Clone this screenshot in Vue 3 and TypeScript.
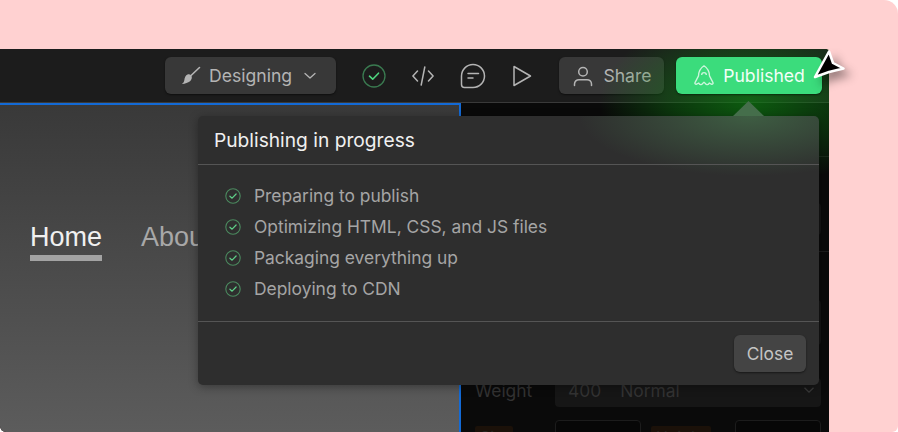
<script setup lang="ts">
const steps = [
  'Preparing to publish',
  'Optimizing HTML, CSS, and JS files',
  'Packaging everything up',
  'Deploying to CDN'
]
</script>

<template>
  <div class="card">
    <div class="window">
      <header class="topbar">
        <button class="btn mode">
          <svg width="22" height="22" viewBox="0 0 22 22" fill="none">
            <path d="M20.500 2.500 11.500 11" stroke="#b4b4b4" stroke-width="1.600" stroke-linecap="round" />
            <path d="M8.500 9.500c2-.8 4 .3 4.300 2.500.3 3-2.500 6.500-10 7 1.500-1 2.200-2 2.500-3.800.3-2.700 1.500-5 3.200-5.700z" fill="#b4b4b4" />
          </svg>
          <span>Designing</span>
          <svg class="chev" width="12" height="12" viewBox="0 0 12 12" fill="none">
            <path d="M1 3.500 6 8l5-4.500" stroke="#b4b4b4" stroke-width="1.300" stroke-linecap="round" stroke-linejoin="round" />
          </svg>
        </button>
        <div class="tools">
          <svg width="24" height="24" viewBox="0 0 24 24" fill="none">
            <circle cx="12" cy="12" r="11" stroke="#3a7a50" stroke-width="1.300" />
            <path d="m7.500 12.200 3.200 3 5.800-6" stroke="#4fd67f" stroke-width="1.600" stroke-linecap="round" stroke-linejoin="round" />
          </svg>
          <svg width="22" height="22" viewBox="0 0 22 22" fill="none" stroke="#b4b4b4" stroke-width="1.500" stroke-linecap="round" stroke-linejoin="round">
            <path d="M5.500 6 .9 11l4.600 5M16.500 6l4.600 5-4.600 5M12.800 2l-3.600 18" />
          </svg>
          <svg width="26" height="26" viewBox="0 0 26 26" fill="none" stroke="#b4b4b4" stroke-width="1.500" stroke-linecap="round" stroke-linejoin="round">
            <path d="M13 1.500C19.350 1.500 24.500 6.650 24.500 13S19.350 24.500 13 24.500H4.500c-1.700 0-3-1.300-3-3V13C1.500 6.650 6.650 1.500 13 1.500z" />
            <path d="M8 10.500h10.500M8 15h5" />
          </svg>
          <svg width="20" height="22" viewBox="0 0 20 22" fill="none" stroke="#b4b4b4" stroke-width="1.500" stroke-linejoin="round">
            <path d="M2 1.500v19L18.500 11z" />
          </svg>
        </div>
        <button class="btn share">
          <svg width="22" height="22" viewBox="0 0 22 22" fill="none" stroke="#b4b4b4" stroke-width="1.500" stroke-linecap="round">
            <circle cx="11" cy="6.800" r="4.300" />
            <path d="M2.500 20.500v-1.500c0-2.500 2-4.300 4.500-4.300h8c2.500 0 4.500 1.800 4.500 4.300v1.500" />
          </svg>
          <span>Share</span>
        </button>
        <button class="btn publish">
          <svg width="20" height="21" viewBox="1.500 0.500 17 18" fill="none" stroke="#cdf5dc" stroke-width="1.150" stroke-linejoin="round">
            <path d="M10 1.200C7 3.200 5.400 6.200 5.300 9.800L2.400 15.400c-.5 1 .3 2 1.300 1.500l1.800-1c.6 1.600 2.500 2 3.300.4L10 15.300l1.200 1c.8 1.600 2.700 1.200 3.300-.4l1.800 1c1 .5 1.800-.5 1.300-1.500L14.700 9.800C14.600 6.200 13 3.200 10 1.200z" />
            <path d="M8 9a2 2 0 1 1 4 0" />
          </svg>
          <span>Published</span>
        </button>
      </header>

      <div class="body">
        <main class="canvas">
          <nav class="nav">
            <a class="active">Home</a>
            <a>About</a>
          </nav>
        </main>
        <aside class="side">
          <div class="section first" />
          <div class="section second">
            <div class="field tall" />
          </div>
          <div class="field big" />
          <div class="row weight">
            <span class="label">Weight</span>
            <div class="select">
              <span>400</span>
              <span class="normal">Normal</span>
              <svg width="12" height="12" viewBox="0 0 12 12" fill="none">
                <path d="M1.500 3.800 6 8.200l4.500-4.400" stroke="#3a3a3a" stroke-width="1.300" />
              </svg>
            </div>
          </div>
          <div class="row size">
            <span class="tag">Size</span>
            <div class="box" />
            <span class="tag wide">Height</span>
            <div class="box" />
          </div>
        </aside>
      </div>

      <div class="glow" />

      <section class="pop">
        <span class="arrow" />
        <h2>Publishing in progress</h2>
        <ul>
          <li v-for="step in steps" :key="step">
            <svg width="16" height="16" viewBox="0 0 16 16" fill="none">
              <circle cx="8" cy="8" r="7.200" stroke="#4b8a5f" stroke-width="1.100" />
              <path d="m4.900 8.200 2.200 2 4-4.200" stroke="#5fd088" stroke-width="1.200" stroke-linecap="round" stroke-linejoin="round" />
            </svg>
            <span>{{ step }}</span>
          </li>
        </ul>
        <footer>
          <button class="btn close">Close</button>
        </footer>
      </section>

      <svg class="cursor" width="42" height="36" viewBox="0 0 42 36">
        <path d="M20 2.500 24 14l10.500 5.500L20 23 6 28z" fill="#000" stroke="#fff" stroke-width="2.500" stroke-linejoin="round" />
      </svg>
    </div>
  </div>
</template>

<style>
html,
body {
  background: #fff;
}
</style>

<style scoped>
.card {
  width: 898px;
  height: 432px;
  box-sizing: border-box;
  padding: 49px 69px 0 0;
  background: #ffd1d1;
  border-radius: 0 14px 6px 6px;
  overflow: hidden;
  font-family: Inter, "Liberation Sans", sans-serif;
}
.window {
  position: relative;
  height: 383px;
  background: #0a0a0a;
  display: flex;
  flex-direction: column;
  border-top-right-radius: 4px;
}
.topbar {
  height: 54px;
  flex: none;
  box-sizing: border-box;
  background: #1c1c1c;
  display: flex;
  align-items: center;
  padding: 0 7px 0 165px;
  border-bottom: 1px solid #3a3a3a;
  border-top-right-radius: 4px;
}
.btn {
  border: none;
  font: inherit;
  height: 37px;
  border-radius: 6px;
  background: #383838;
  color: #b4b4b4;
  font-size: 17.600px;
  display: flex;
  align-items: center;
  box-shadow: 0 1px 2px rgba(0, 0, 0, 0.5);
}
.mode {
  width: 171px;
  padding: 0 0 0 14px;
  gap: 8px;
}
.chev {
  margin-left: 4px;
}
.tools {
  display: flex;
  align-items: center;
  gap: 26px;
  width: 224px;
  padding-left: 26px;
  box-sizing: border-box;
}
.share {
  width: 105px;
  padding: 0 0 0 13px;
  gap: 9px;
}
.publish {
  position: relative;
  z-index: 4;
  margin-left: 12px;
  width: 146px;
  padding: 0 0 0 18px;
  gap: 9px;
  background: #3bdc7c;
  color: #f2fff7;
}
.body {
  flex: 1;
  display: flex;
  min-height: 0;
}
.canvas {
  width: 461px;
  flex: none;
  box-sizing: border-box;
  border-top: 2px solid #136ad6;
  border-right: 2px solid #136ad6;
  background: linear-gradient(180deg, #393939 0%, #5c5c5c 100%);
  overflow: hidden;
  padding: 117px 0 0 30px;
}
.nav {
  display: flex;
  gap: 39px;
  font-family: "Liberation Sans", Arial, sans-serif;
  font-size: 27px;
  color: #a8a8a8;
}
.nav a {
  white-space: nowrap;
  height: 33px;
}
.nav .active {
  color: #f0f0f0;
  border-bottom: 6px solid #a3a3a3;
}
.side {
  flex: 1;
  display: flex;
  flex-direction: column;
  min-width: 0;
  color: #333;
  font-size: 17.400px;
  overflow: hidden;
}
.section {
  box-sizing: border-box;
  border-bottom: 1px solid #1c1c1c;
  flex: none;
}
.first {
  height: 54px;
}
.second {
  height: 95px;
  padding: 46px 8px 0 14px;
}
.field {
  background: #141414;
  border-radius: 4px;
  margin-right: 8px;
}
.tall {
  height: 32px;
  margin-right: 0;
}
.big {
  height: 45px;
  margin: 48px 8px 0 14px;
  flex: none;
}
.row {
  display: flex;
  flex: none;
  padding: 0 8px 0 14px;
}
.weight {
  height: 29px;
  margin-top: 33px;
  align-items: center;
}
.label {
  width: 80px;
  flex: none;
  padding-bottom: 5px;
}
.select {
  flex: 1;
  height: 29px;
  box-sizing: border-box;
  padding: 0 6px 5px 13px;
  background: #161616;
  border-radius: 4px;
  display: flex;
  align-items: center;
}
.normal {
  margin-left: 19px;
  flex: 1;
}
.size {
  height: 12px;
  margin-top: 13px;
}
.tag {
  width: 38px;
  height: 18px;
  margin-top: 6px;
  flex: none;
  background: #1b1109;
  border-radius: 2px;
  font-size: 16px;
  line-height: 22px;
  color: #262420;
  padding-left: 5px;
  box-sizing: border-box;
}
.tag.wide {
  width: 60px;
  margin-left: 10px;
  margin-right: 24px;
}
.box {
  width: 86px;
  height: 30px;
  box-sizing: border-box;
  border: 1px solid #1c1c1c;
  border-radius: 4px;
  flex: none;
  background: #070707;
  margin-left: 42px;
}
.box:last-child {
  margin-left: 0;
}
.glow {
  position: absolute;
  left: 560px;
  top: 0;
  width: 269px;
  height: 125px;
  z-index: 1;
  pointer-events: none;
  overflow: hidden;
  background: radial-gradient(ellipse 150px 85px at 189px 52px, rgba(14, 130, 18, 0.68) 0%, rgba(14, 120, 18, 0.42) 50%, rgba(14, 120, 18, 0) 100%);
}
.pop {
  position: absolute;
  z-index: 2;
  left: 198px;
  top: 67px;
  width: 621px;
  height: 269px;
  background:
    radial-gradient(ellipse 170px 60px at 551px 0, rgba(88, 170, 100, 0.38), rgba(88, 170, 100, 0) 100%),
    #2e2e2e;
  border-radius: 5px;
  box-shadow: 0 2px 10px rgba(0, 0, 0, 0.35);
  display: flex;
  flex-direction: column;
  color: #a5a5a5;
}
.arrow {
  position: absolute;
  left: 535px;
  top: -15px;
  width: 31px;
  height: 15px;
  background: #456e4b;
  clip-path: polygon(50% 0, 100% 100%, 0 100%);
}
h2 {
  margin: 0;
  height: 49px;
  flex: none;
  box-sizing: border-box;
  padding-left: 16px;
  border-bottom: 1px solid #555;
  display: flex;
  align-items: center;
  font-size: 19.200px;
  font-weight: 400;
  color: #f0f0f0;
}
ul {
  list-style: none;
  margin: 0;
  padding: 15px 0 0 27px;
  height: 157px;
  flex: none;
  box-sizing: border-box;
  border-bottom: 1px solid #555;
}
li {
  height: 31px;
  display: flex;
  align-items: center;
  gap: 13px;
  font-size: 17.400px;
}
footer {
  flex: 1;
  display: flex;
  align-items: center;
  justify-content: flex-end;
  padding-right: 13px;
}
.close {
  width: 72px;
  justify-content: center;
  background: #444;
  color: #c4c4c4;
  font-size: 17.400px;
}
.cursor {
  position: absolute;
  z-index: 5;
  left: 809px;
  top: 0;
  filter: drop-shadow(6px 6px 5px rgba(0, 0, 0, 0.4));
}
</style>
